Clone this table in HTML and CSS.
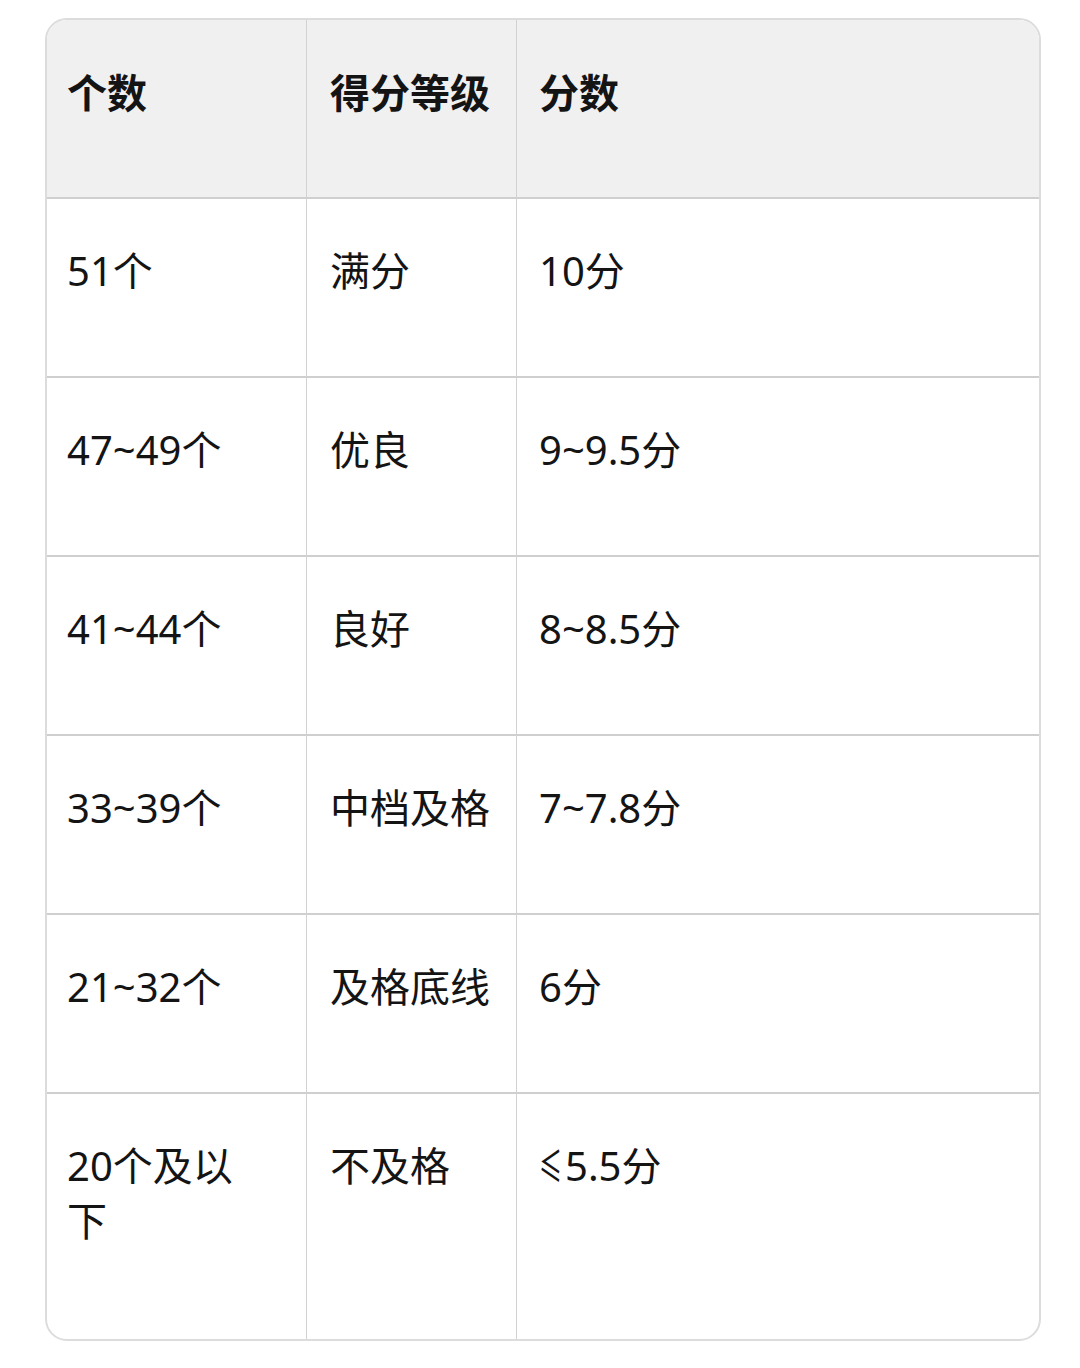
FILE: index.html
```html
<!DOCTYPE html>
<html lang="zh">
<head>
<meta charset="utf-8">
<link rel="stylesheet" href="styles.css">
</head>
<body>
<div class="wrap">
  <table class="score">
    <colgroup>
      <col class="c1"><col class="c2"><col class="c3">
    </colgroup>
    <thead>
      <tr><th>个数</th><th>得分等级</th><th>分数</th></tr>
    </thead>
    <tbody>
      <tr><td>51个</td><td>满分</td><td>10分</td></tr>
      <tr><td>47~49个</td><td>优良</td><td>9~9.5分</td></tr>
      <tr><td>41~44个</td><td>良好</td><td>8~8.5分</td></tr>
      <tr><td>33~39个</td><td>中档及格</td><td>7~7.8分</td></tr>
      <tr><td>21~32个</td><td>及格底线</td><td>6分</td></tr>
      <tr class="last"><td>20个及以下</td><td>不及格</td><td><span class="le">≤</span>5.5分</td></tr>
    </tbody>
  </table>
</div>
</body>
</html>
```
FILE: styles.css
```css
html, body {
  margin: 0;
  padding: 0;
  background: #ffffff;
}
body {
  font-family: "Noto Sans", "Noto Sans CJK SC", sans-serif;
  color: #141414;
}
.wrap {
  padding: 18px 0 0 45px;
}
.score {
  width: 996px;
  border-collapse: separate;
  border-spacing: 0;
  border: 2px solid #dcdcdc;
  border-radius: 22px;
  overflow: hidden;
  table-layout: fixed;
}
.c1 { width: 259px; }
.c2 { width: 210px; }
.c3 { width: auto; }
.score th, .score td {
  text-align: left;
  vertical-align: top;
  font-size: 40px;
  line-height: 55px;
  padding: 44px 20px 0 20px;
  box-sizing: border-box;
  height: 179px;
  border-left: 1px solid #d2d2d2;
  border-top: 2px solid #cfcfcf;
}
.score th:first-child, .score td:first-child {
  border-left: none;
  padding-right: 44px;
}
.score thead th {
  border-top: none;
  height: 177px;
  background: #f0f0f0;
  font-weight: 700;
  padding-top: 45px;
}
.score td:nth-child(2), .score th:nth-child(2) {
  padding-left: 23px;
}
.score td:nth-child(3), .score th:nth-child(3) {
  padding-left: 22px;
}
.score tr.last td {
  height: 247px;
}
.le {
  display: inline-block;
  transform: scaleX(0.58);
  transform-origin: left center;
  margin-right: -14px;
}
```
